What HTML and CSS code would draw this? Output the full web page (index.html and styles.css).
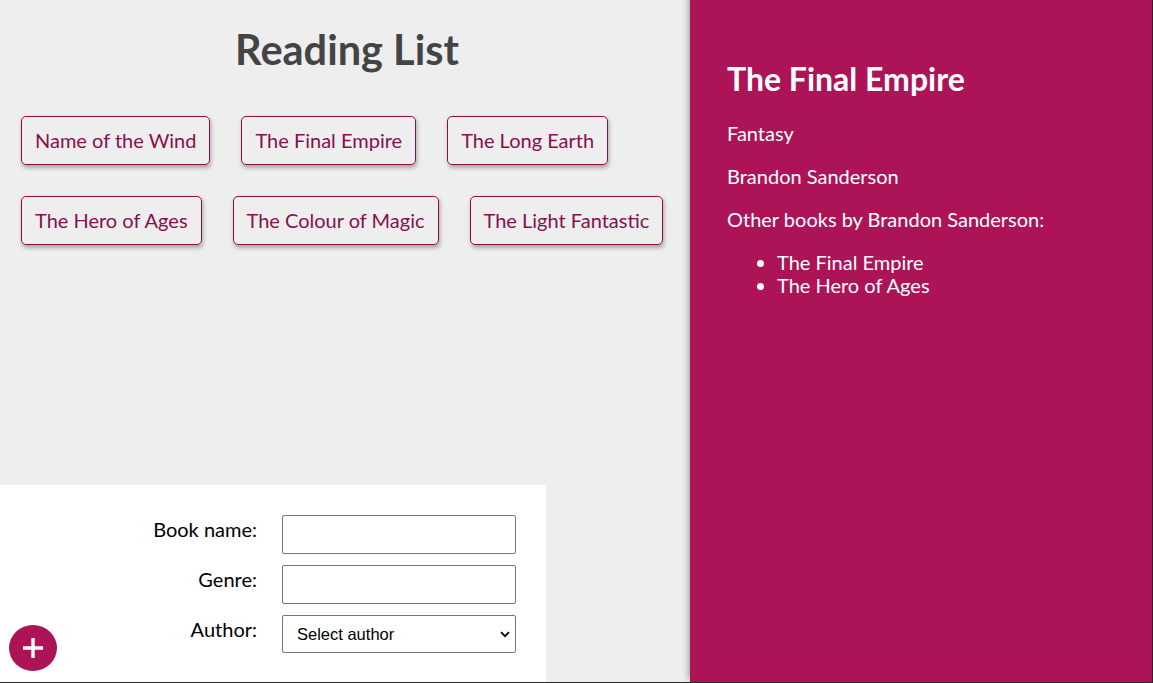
FILE: index.html
```html
<!DOCTYPE html>
<html lang="en">
<head>
<meta charset="utf-8">
<title>Reading List</title>
<link rel="stylesheet" href="styles.css">
</head>
<body>
<div class="app">
  <div class="main">
    <h1 class="title">Reading List</h1>
    <ul class="book-list">
      <li class="book">Name of the Wind</li>
      <li class="book">The Final Empire</li>
      <li class="book">The Long Earth</li>
      <li class="book">The Hero of Ages</li>
      <li class="book">The Colour of Magic</li>
      <li class="book">The Light Fantastic</li>
    </ul>
    <form class="add-form">
      <div class="field">
        <label class="label">Book name:</label>
        <input class="input" type="text">
      </div>
      <div class="field">
        <label class="label">Genre:</label>
        <input class="input" type="text">
      </div>
      <div class="field">
        <label class="label">Author:</label>
        <div class="select-wrap">
          <select class="input select">
            <option>Select author</option>
          </select>
          <svg class="chevron" width="10" height="7" viewBox="0 0 10 7"><path d="M1 1.2L5 5.2L9 1.2" stroke="#000" stroke-width="1.8" fill="none"/></svg>
        </div>
      </div>
      <button class="add-btn" type="button" aria-label="Add book">
        <svg width="20" height="20" viewBox="0 0 20 20"><path d="M10 0V20M0 10H20" stroke="#fff" stroke-width="3.4" fill="none"/></svg>
      </button>
    </form>
  </div>
  <aside class="details">
    <h2 class="details-title">The Final Empire</h2>
    <p class="details-line">Fantasy</p>
    <p class="details-line">Brandon Sanderson</p>
    <p class="details-line">Other books by Brandon Sanderson:</p>
    <ul class="other-books">
      <li>The Final Empire</li>
      <li>The Hero of Ages</li>
    </ul>
  </aside>
</div>
</body>
</html>
```

FILE: styles.css
```css
html, body {
  margin: 0;
  padding: 0;
  height: 100%;
}
body {
  background: #eee;
  font-family: "Lato", "Open Sans", sans-serif;
  font-size: 20px;
  overflow: hidden;
}
.app {
  display: flex;
  height: 100vh;
  box-sizing: border-box;
  border-right: 1px solid #2a2a2a;
  border-bottom: 1px solid #2a2a2a;
}
.main {
  width: 690px;
  flex: none;
  display: flex;
  flex-direction: column;
  position: relative;
}
.title {
  margin: 25px 0 0;
  padding-left: 4px;
  font-size: 41.5px;
  line-height: 48px;
  font-weight: 700;
  color: #444;
  text-align: center;
}
.book-list {
  list-style: none;
  margin: 43px 0 0;
  padding: 0 0 0 21px;
  display: flex;
  flex-wrap: wrap;
  gap: 31px 31px;
}
.book {
  padding: 10px 13px;
  line-height: 27px;
  border: 1px solid #880E4F;
  border-radius: 5px;
  box-shadow: 1px 2.5px 4px rgba(0, 0, 0, 0.3);
  color: #880E4F;
  cursor: pointer;
}
.add-form {
  margin-top: auto;
  width: 546px;
  box-sizing: border-box;
  background: #fff;
  padding: 30px 30px 18px 25px;
  position: relative;
}
.field {
  display: grid;
  grid-template-columns: 232px 234px;
  column-gap: 25px;
  margin-bottom: 11px;
}
.label {
  text-align: right;
  padding-top: 3px;
  line-height: 23px;
  color: #000;
}
.input {
  width: 100%;
  height: 39px;
  margin: 0;
  box-sizing: border-box;
  border: 1px solid #767676;
  border-radius: 2px;
  background: #fff;
  font-family: "Liberation Sans", Arial, sans-serif;
  font-size: 16.5px;
  padding: 6px 8px;
}
.select-wrap {
  position: relative;
}
.select {
  height: 38px;
  color: #000;
  padding: 4px 30px 4px 14px;
  appearance: none;
  -webkit-appearance: none;
}
.chevron {
  position: absolute;
  right: 6px;
  top: 16px;
  pointer-events: none;
}
.add-btn {
  position: absolute;
  left: 9px;
  bottom: 11px;
  width: 48px;
  height: 46px;
  border: 0;
  border-radius: 50%;
  background: #AD1457;
  display: flex;
  align-items: center;
  justify-content: center;
  padding: 0;
  cursor: pointer;
}
.details {
  flex: 1;
  background: #AD1457;
  color: #fff;
  padding: 38px 37px;
  box-shadow: -2px -3px 6px rgba(0, 0, 0, 0.3);
  position: relative;
}
.details-title {
  margin: 23px 0 26px;
  font-size: 32px;
  line-height: 35px;
  font-weight: 700;
}
.details-line {
  margin: 0 0 20px;
  line-height: 23px;
}
.other-books {
  margin: 0;
  padding-left: 50px;
  line-height: 23px;
}
```
